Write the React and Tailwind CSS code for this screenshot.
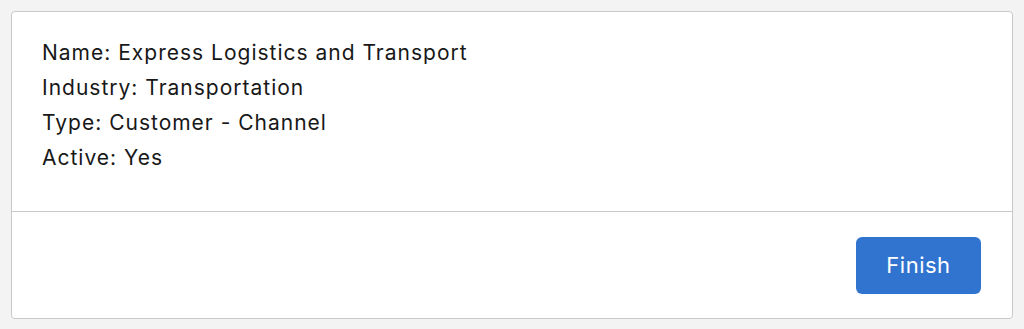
export default function App() {
  const rows = [
    ['Name', 'Express Logistics and Transport'],
    ['Industry', 'Transportation'],
    ['Type', 'Customer - Channel'],
    ['Active', 'Yes'],
  ];
  return (
    <div className="min-h-[329px] bg-[#f3f3f3] p-[11px] font-['Inter',sans-serif]">
      <div className="h-[308px] bg-white border border-[#c9c9c9] rounded-[4px] flex flex-col">
        <div className="h-[199px] px-[30px] pt-[23px] text-[21px] leading-[35px] tracking-[1px] text-[#181818]">
          {rows.map(([k, v]) => (
            <div key={k}>
              {k}: {v}
            </div>
          ))}
        </div>
        <div className="border-t border-[#c9c9c9] flex-1 flex justify-end items-start pt-[25px] pr-[31px]">
          <button className="w-[125px] h-[57px] rounded-[6px] bg-[#3174cf] text-white text-[22px] tracking-[0.5px]">
            Finish
          </button>
        </div>
      </div>
    </div>
  );
}
